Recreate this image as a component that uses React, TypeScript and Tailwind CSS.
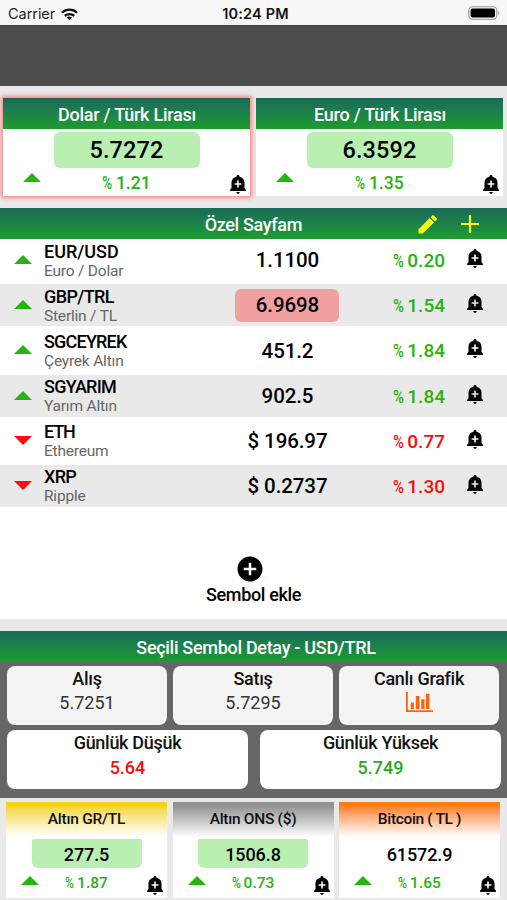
import type { ReactNode } from 'react';
import { MdAddCircle } from 'react-icons/md';
import clsx from 'clsx';

interface Pair {
  title: string;
  price: string;
  change: string;
  selected?: boolean;
}

interface SymbolRow {
  code: string;
  name: string;
  price: string;
  change: string;
  tracking?: string;
  down?: boolean;
  flash?: boolean;
}

interface Commodity {
  title: string;
  price: string;
  change: string;
  header: string;
  tracking: string;
  flash?: boolean;
}

const pairs: Pair[] = [
  { title: 'Dolar / Türk Lirası', price: '5.7272', change: '1.21', selected: true },
  { title: 'Euro / Türk Lirası', price: '6.3592', change: '1.35' },
];

const symbols: SymbolRow[] = [
  { code: 'EUR/USD', name: 'Euro / Dolar', price: '1.1100', change: '0.20', tracking: 'tracking-[0px]' },
  { code: 'GBP/TRL', name: 'Sterlin / TL', price: '6.9698', change: '1.54', tracking: 'tracking-[-0.6px]', flash: true },
  { code: 'SGCEYREK', name: 'Çeyrek Altın', price: '451.2', change: '1.84', tracking: 'tracking-[-0.8px]' },
  { code: 'SGYARIM', name: 'Yarım Altın', price: '902.5', change: '1.84', tracking: 'tracking-[-0.75px]' },
  { code: 'ETH', name: 'Ethereum', price: '$ 196.97', change: '0.77', tracking: 'tracking-[-1.1px]', down: true },
  { code: 'XRP', name: 'Ripple', price: '$ 0.2737', change: '1.30', tracking: 'tracking-[-0.7px]', down: true },
];

const commodities: Commodity[] = [
  { title: 'Altın GR/TL', price: '277.5', change: '1.87', header: 'from-[#f5d414]', tracking: 'tracking-[-0.25px]', flash: true },
  { title: 'Altın ONS ($)', price: '1506.8', change: '0.73', header: 'from-[#929292]', tracking: 'tracking-[-0.3px]', flash: true },
  { title: 'Bitcoin ( TL )', price: '61572.9', change: '1.65', header: 'from-[#ff7d0c]', tracking: 'tracking-[-0.35px]' },
];

function Arrow({ down }: { down?: boolean }) {
  return (
    <svg viewBox="0 0 18 9" className={clsx('block h-[9px] w-[18px]', down ? 'fill-[#fb0d0b]' : 'fill-[#25b50f]')}>
      <path d={down ? 'M0 0h18L9 9z' : 'M0 9h18L9 0z'} />
    </svg>
  );
}

function BellPlus({ className }: { className?: string }) {
  return (
    <svg viewBox="0 0 16 19" className={clsx('h-[19px] w-[16px] fill-black', className)}>
      <path
        fillRule="evenodd"
        d="M8 0c.9 0 1.5.6 1.5 1.4v.4c3.200.7 5 3 5 5.800V13L16 14.900V16H0v-1.100L1.500 13V7.600c0-2.800 1.800-5.100 5-5.800v-.4C6.500.6 7.100 0 8 0zM7.200 5.600v2.600H4.600v1.600h2.600v2.600h1.600V9.800h2.600V8.200H8.800V5.600z"
      />
      <path d="M6.300 17h3.400c0 1-.7 1.800-1.700 1.800S6.300 18 6.300 17z" />
    </svg>
  );
}

function Pencil() {
  return (
    <svg viewBox="0 0 19 19" className="size-[19px] fill-[#fbfb0b]">
      <path d="M.4 18.600v-4L11.700 3.100l4.300 4.300L4.700 18.600zM12.600 2.200 14.200.6c.5-.5 1.200-.5 1.700 0l2.700 2.700c.5.5.5 1.200 0 1.700L17 6.600z" />
    </svg>
  );
}

function Percent({ value, className }: { value: string; className?: string }) {
  return (
    <span className={clsx('flex items-baseline font-medium whitespace-nowrap', className)}>
      <span className="inline-block w-[0.77em] origin-left scale-x-[0.78]">%</span>
      <span>{value}</span>
    </span>
  );
}

function Bar({ children }: { children: ReactNode }) {
  return (
    <div className="flex h-[31px] shrink-0 items-center justify-center bg-linear-to-b from-[#1b6a56] to-[#1d9c2b] pt-px text-[18px] font-medium tracking-[-0.35px] text-white">
      {children}
    </div>
  );
}

function StatusBar() {
  return (
    <div className="flex h-[25px] items-center bg-[#f7f7f7] pt-[3px] pr-[7px] pl-2 font-['Inter'] text-[#222]">
      <div className="flex flex-1 items-center gap-[6px] text-[14.5px] tracking-[-0.05px]">
        Carrier
        <svg viewBox="0 0 18 13" className="h-[13px] w-[17px]" fill="none" stroke="#111" strokeWidth="2.4">
          <path d="M1 4.600a11.500 11.500 0 0 1 16 0" />
          <path d="M4 8a7.200 7.200 0 0 1 10 0" />
          <path d="M9 12.600 6.300 9.900a3.900 3.900 0 0 1 5.400 0z" fill="#111" stroke="none" />
        </svg>
      </div>
      <div className="pl-[3px] text-[14.5px] font-semibold tracking-[0.15px] text-[#111]">10:24 PM</div>
      <div className="flex flex-1 justify-end">
        <svg viewBox="0 0 32 14" className="mb-[2px] h-[14px] w-[32px]">
          <rect x="0.8" y="0.8" width="28" height="12.4" rx="3.6" fill="#f7f7f7" stroke="#999" strokeWidth="1.1" />
          <rect x="2.6" y="2.4" width="24.4" height="9.2" rx="2" fill="#000" />
          <path d="M30.200 5v4c1.600-.6 1.600-3.400 0-4z" fill="#999" />
        </svg>
      </div>
    </div>
  );
}

function PairCard({ title, price, change, selected }: Pair) {
  return (
    <div className={clsx('h-[98px] bg-white', selected && 'shadow-[0_0_4px_2px_#f78787]')}>
      <Bar>
        <span className="pl-px tracking-[-0.25px]">{title}</span>
      </Bar>
      <div className="mx-auto mt-[3px] flex h-9 w-[146px] items-center justify-center rounded-[6px] bg-[#b9efb1] pt-[2px] text-[23.5px] font-medium tracking-[0.1px] text-black">
        {price}
      </div>
      <div className="grid h-[28px] grid-cols-[50px_1fr_50px]">
        <div className="pt-[5px] pl-5">
          <Arrow />
        </div>
        <Percent value={change} className="justify-center pt-[2px] text-[17.5px] leading-[26px] text-[#25b50f]" />
        <BellPlus className="mt-[7px] ml-[30px]" />
      </div>
    </div>
  );
}

function Row({ row, striped }: { row: SymbolRow; striped: boolean }) {
  return (
    <div className={clsx('grid h-[45.2px] grid-cols-[44px_176px_134px_1fr_62px] pb-[3px]', striped && 'bg-[#e9e9e9] bg-clip-content')}>
      <div className="flex items-center pb-px pl-[14px]">
        <Arrow down={row.down} />
      </div>
      <div className="pt-[2.5px]">
        <div className={clsx('text-[18px] leading-[20px] font-medium text-black', row.tracking)}>{row.code}</div>
        <div className="text-[15.5px] leading-[19px] tracking-[-0.2px] text-[#666]">{row.name}</div>
      </div>
      <div className="flex items-center justify-center">
        <div
          className={clsx(
            'flex h-[33px] w-[104px] items-center justify-center rounded-[6px] pt-px pl-px text-[20.5px] font-medium tracking-[-0.1px] whitespace-nowrap text-black',
            row.flash && 'bg-[#f1a0a0]',
          )}
        >
          {row.price}
        </div>
      </div>
      <Percent
        value={row.change}
        className={clsx('justify-end pt-[8px] text-[19px] leading-[28px]', row.down ? 'text-[#fb0d0b]' : 'text-[#25b50f]')}
      />
      <BellPlus className="mt-[10px] ml-[22px]" />
    </div>
  );
}

function Tile({ title, className, children }: { title: string; className?: string; children: ReactNode }) {
  return (
    <div className={clsx('flex h-[59px] flex-col items-center rounded-[8px]', className)}>
      <div className="pt-px text-[18px] leading-[24px] font-medium tracking-[-0.3px] text-[#111]">{title}</div>
      {children}
    </div>
  );
}

function ChartIcon() {
  return (
    <svg viewBox="0 0 27 21" className="mt-px h-[21px] w-[27px] fill-[#fb640f]">
      <path d="M0 0h1.800v18.200H27V20H0z" />
      <path d="M4.700 10.500h3.200V17H4.700zM9.800 4h3.800v13H9.800zM15.200 7.200h3.300V17h-3.300zM19.800 1.800h3.600V17h-3.600z" />
    </svg>
  );
}

function CommodityCard({ title, price, change, header, tracking, flash }: Commodity) {
  return (
    <div className="h-[96px] bg-white">
      <div className={clsx('flex h-[35px] items-center justify-center bg-linear-to-b from-10% to-white text-[15.5px] font-medium text-[#111]', header, tracking)}>
        {title}
      </div>
      <div
        className={clsx(
          'mx-auto mt-[2px] flex h-[29px] w-[110px] items-center justify-center rounded-t-[2px] rounded-b-[6px] pt-px text-[18px] font-medium tracking-[-0.1px] text-black',
          flash && 'bg-[#b9efb1]',
        )}
      >
        {price}
      </div>
      <div className="grid h-[30px] grid-cols-[48px_1fr_48px]">
        <div className="pt-[8px] pl-[15px]">
          <Arrow />
        </div>
        <Percent value={change} className="justify-center pt-[3px] text-[15.5px] leading-[25px] text-[#25b50f]" />
        <BellPlus className="mt-[8px] ml-[28px]" />
      </div>
    </div>
  );
}

export default function App() {
  return (
    <div className="flex h-[900px] w-[507px] flex-col overflow-hidden bg-[#e9e9e9] font-['Roboto','Noto_Sans',sans-serif]">
      <StatusBar />
      <div className="h-[61px] border-t border-[#434343] bg-[#4d4d4d]" />

      <div className="grid grid-cols-[247px_247px] gap-[6px] pt-[12px] pl-[3px]">
        {pairs.map((pair) => (
          <PairCard key={pair.title} {...pair} />
        ))}
      </div>

      <div className="mt-[12px] h-[411px] bg-white">
        <Bar>
          <span className="flex flex-1 justify-end">
            <span>Özel Sayfam</span>
          </span>
          <span className="flex w-[205px] items-center pl-[116px]">
            <Pencil />
            <svg viewBox="0 0 18 18" className="ml-[24px] size-[18px]" fill="none" stroke="#fbfb0b" strokeWidth="2.2">
              <path d="M9 0v18M0 9h18" />
            </svg>
          </span>
        </Bar>
        {symbols.map((row, i) => (
          <Row key={row.code} row={row} striped={i % 2 === 1} />
        ))}
        <div className="flex flex-col items-center pt-[44px]">
          <MdAddCircle className="mr-[7px] size-[30px] text-black" />
          <div className="text-[18px] leading-[22px] font-medium tracking-[-0.35px] text-black">Sembol ekle</div>
        </div>
      </div>

      <div className="mt-[12px] h-[167px] bg-[#666]">
        <Bar>
          <span className="pl-[5px] tracking-[-0.3px]">Seçili Sembol Detay - USD/TRL</span>
        </Bar>
        <div className="grid grid-cols-[160px_160px_160px] gap-[6px] px-[7px] pt-[4px]">
          <Tile title="Alış" className="bg-[#f4f4f4]">
            <div className="text-[18px] leading-[24px] text-[#333]">5.7251</div>
          </Tile>
          <Tile title="Satış" className="bg-[#f4f4f4]">
            <div className="text-[18px] leading-[24px] text-[#333]">5.7295</div>
          </Tile>
          <Tile title="Canlı Grafik" className="bg-[#f4f4f4]">
            <ChartIcon />
          </Tile>
        </div>
        <div className="grid grid-cols-[241px_241px] gap-[12px] px-[7px] pt-[5px]">
          <Tile title="Günlük Düşük" className="bg-white">
            <div className="text-[18px] leading-[25px] font-medium text-[#fb0d0b]">5.64</div>
          </Tile>
          <Tile title="Günlük Yüksek" className="bg-white">
            <div className="text-[18px] leading-[25px] font-medium text-[#2ba91d]">5.749</div>
          </Tile>
        </div>
      </div>

      <div className="grid grid-cols-[161px_161px_161px] gap-[5.5px] pt-[4px] pl-[6px]">
        {commodities.map((item) => (
          <CommodityCard key={item.title} {...item} />
        ))}
      </div>
    </div>
  );
}
